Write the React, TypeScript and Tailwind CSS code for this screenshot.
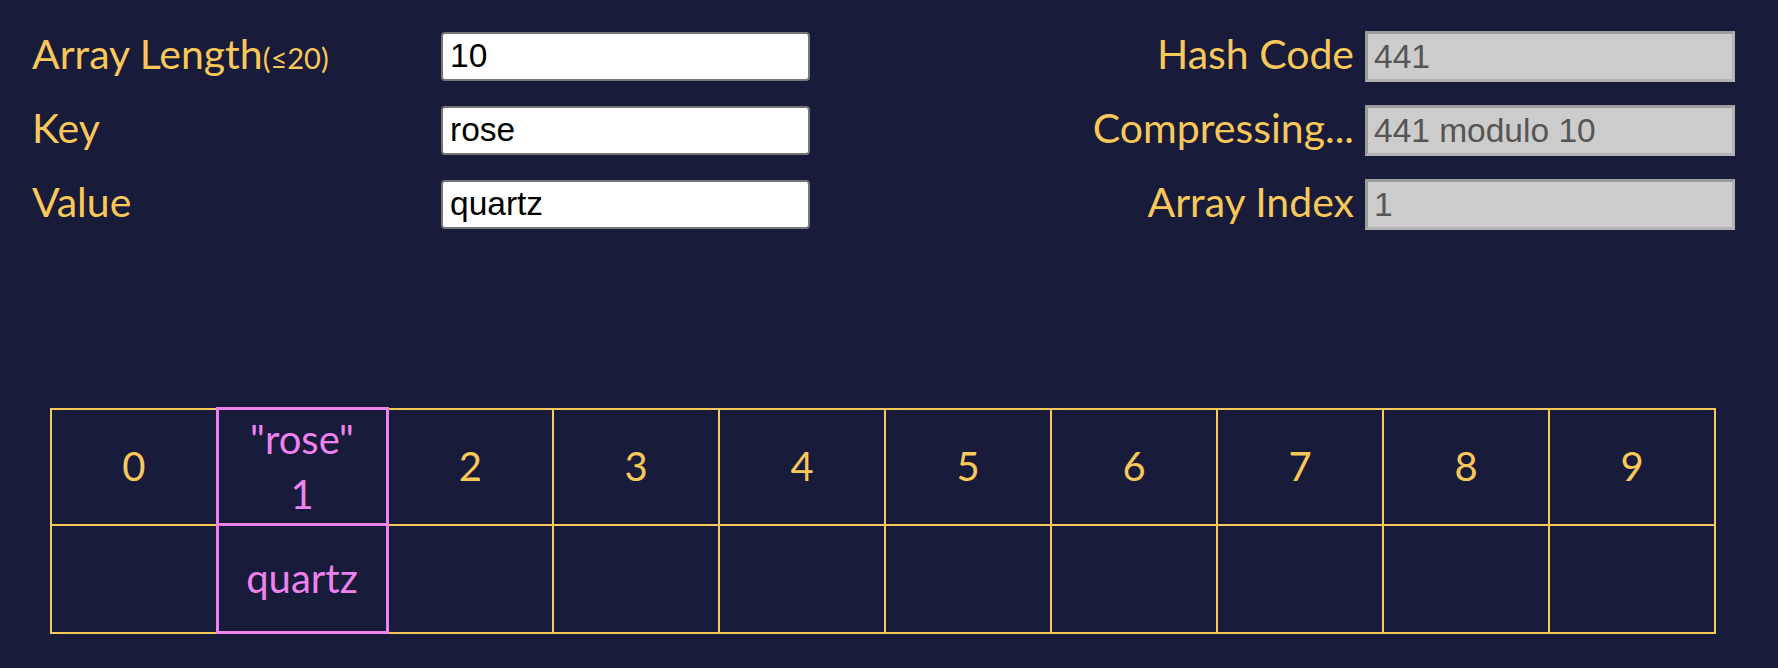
import React from "react";

const labelCls =
  "font-['Lato',sans-serif] text-[41px] leading-[43px] text-[#f9c85a] mb-[6px] whitespace-nowrap";

function EditInput({ value }: { value: string }) {
  return (
    <input
      readOnly
      value={value}
      className="w-[369px] h-[49px] bg-white border-2 border-[#767676] rounded-[4px] pl-[7px] font-['Liberation_Sans',Arial,sans-serif] text-[33.5px] text-black outline-none"
    />
  );
}

function OutInput({ value }: { value: string }) {
  return (
    <input
      disabled
      value={value}
      className="w-[370px] h-[51px] bg-[#cccccc] border-[3px] border-t-[#9c9c9c] border-l-[#9c9c9c] border-b-[#b3b3b3] border-r-[#b3b3b3] pl-[6px] font-['Liberation_Sans',Arial,sans-serif] text-[33.5px] text-[#555555] outline-none"
    />
  );
}

export default function App() {
  const cols = Array.from({ length: 10 }, (_, i) => i);
  return (
    <div className="w-full h-[668px] bg-[#181b39] overflow-hidden">
      <div className="flex justify-between items-start pt-[32px] pl-[32px] pr-[43px]">
        <div className="grid grid-cols-[409px_369px] gap-y-[25px] items-center">
          <div className={labelCls}>
            Array Length<span className="text-[29px] leading-none">(≤20)</span>
          </div>
          <EditInput value="10" />
          <div className={labelCls}>Key</div>
          <EditInput value="rose" />
          <div className={labelCls}>Value</div>
          <EditInput value="quartz" />
        </div>
        <div className="grid grid-cols-[auto_370px] gap-x-[11px] gap-y-[23px] items-center -mt-[1px]">
          <div className={labelCls + " text-right"}>Hash Code</div>
          <OutInput value="441" />
          <div className={labelCls + " text-right"}>Compressing...</div>
          <OutInput value="441 modulo 10" />
          <div className={labelCls + " text-right"}>Array Index</div>
          <OutInput value="1" />
        </div>
      </div>
      <div className="pl-[50px] pt-[177px]">
        <table className="table-fixed border-collapse w-[1664px] font-['Lato',sans-serif] text-[40px] leading-[55px]">
          <colgroup>
            {cols.map((i) =>
              i === 1 ? (
                <col key={i} className="w-[170px]" />
              ) : (
                <col key={i} className="w-[166px]" />
              )
            )}
          </colgroup>
          <tbody>
            <tr>
              {cols.map((i) =>
                i === 1 ? (
                  <td
                    key={i}
                    className="h-[116px] border-[3px] border-[#ee82ee] text-[#ee82ee] text-center align-middle p-0"
                  >
                    <div>"rose"</div>
                    <div>1</div>
                  </td>
                ) : (
                  <td
                    key={i}
                    className="h-[116px] border-2 border-[#f9c85a] text-[#f9c85a] text-center align-middle p-0"
                  >
                    {i}
                  </td>
                )
              )}
            </tr>
            <tr>
              {cols.map((i) =>
                i === 1 ? (
                  <td
                    key={i}
                    className="h-[108px] border-[3px] border-[#ee82ee] text-[#ee82ee] text-center align-middle p-0"
                  >
                    quartz
                  </td>
                ) : (
                  <td
                    key={i}
                    className="h-[108px] border-2 border-[#f9c85a] text-center align-middle p-0"
                  ></td>
                )
              )}
            </tr>
          </tbody>
        </table>
      </div>
    </div>
  );
}
